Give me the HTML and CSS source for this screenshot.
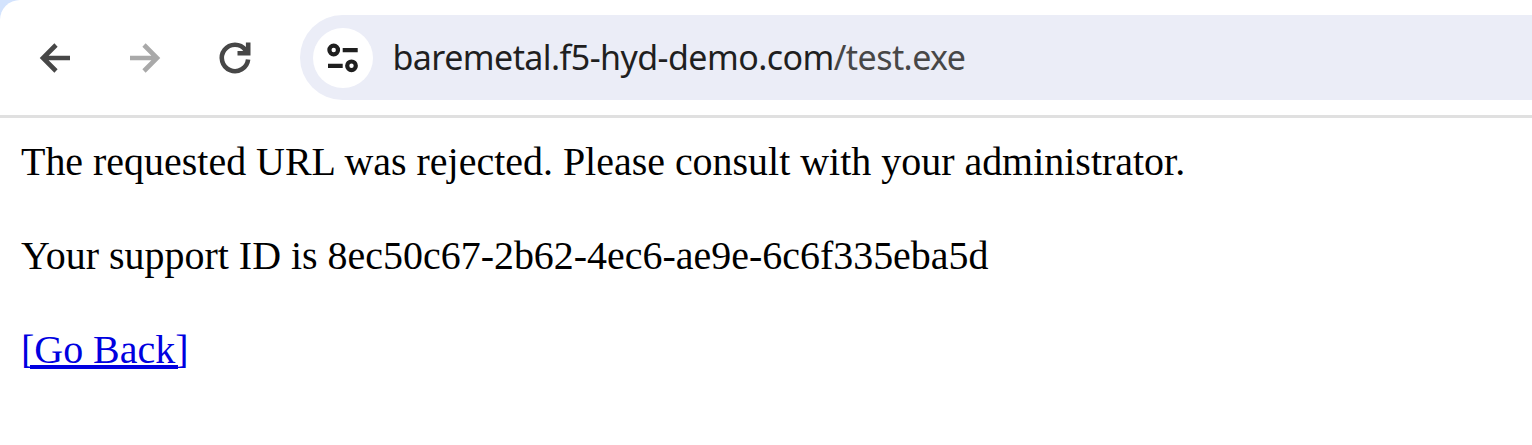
FILE: index.html
```
<!DOCTYPE html>
<html lang="en">
<head>
<meta charset="utf-8">
<title>Request Rejected</title>
<link rel="stylesheet" href="styles.css">
</head>
<body>
<div class="frame">
<header class="toolbar">
  <nav class="nav">
    <svg class="icon" viewBox="0 0 36 36"><path d="M33 18H6M19 5L6 18l13 13"/></svg>
    <svg class="icon icon-muted" viewBox="0 0 36 36"><path d="M3 18h27M17 5l13 13-13 13"/></svg>
    <svg class="icon" viewBox="0 0 36 36"><path d="M31.100 19.500A13.200 13.200 0 1 1 28.500 10L31 13M31.200 2.500V13.200H20.500"/></svg>
  </nav>
  <div class="address">
    <span class="site">
      <svg class="tune" viewBox="0 0 30 28"><circle cx="5.700" cy="6" r="4.300"/><path d="M14.700 6.200h15M0 21.800h14.700"/><circle cx="23.500" cy="21.800" r="4.300"/></svg>
    </span>
    <span class="url">baremetal.f5-hyd-demo.com<span class="path">/test.exe</span></span>
  </div>
</header>
</div>
<main class="page">
  <p>The requested URL was rejected. Please consult with your administrator.</p>
  <p>Your support ID is 8ec50c67-2b62-4ec6-ae9e-6c6f335eba5d</p>
  <p><a class="link" href="#">[Go Back]</a></p>
</main>
</body>
</html>
```
FILE: styles.css
```
body { margin: 0; background: #fff; overflow: hidden; }
.frame { background: #d3e3fd; }
.toolbar { box-sizing: border-box; height: 118px; padding-top: 15px; display: flex; background: #fff; border-bottom: 3px solid #e0e0e0; border-top-left-radius: 20px; }
.nav { width: 263px; height: 85px; padding-left: 37px; display: flex; align-items: center; gap: 54px; }
.icon { width: 36px; height: 36px; fill: none; stroke: #474747; stroke-width: 4.600; }
.icon-muted { stroke: #a9a9a9; }
.address { flex: 1; height: 85px; display: flex; align-items: center; background: #ebedf7; border-radius: 43px 0 0 43px; }
.site { width: 60px; height: 60px; margin-left: 12.500px; border-radius: 50%; background: #fff; display: flex; align-items: center; justify-content: center; }
.tune { width: 30px; height: 28px; fill: none; stroke: #1f1f1f; stroke-width: 4.200; overflow: visible; }
.url { margin-left: 20px; padding-bottom: 2px; font: 34px "Noto Sans", sans-serif; letter-spacing: -0.560px; color: #1f1f1f; white-space: nowrap; }
.path { color: #474747; }
.page { padding: 20px 21px; font: 39.950px/47px "Liberation Serif", serif; color: #000; }
.page p { margin: 0 0 47px; white-space: nowrap; }
.link { color: #0000e0; text-decoration: none; background: linear-gradient(#0000e0, #0000e0) 9px 38px / 148px 4px no-repeat; }
```
